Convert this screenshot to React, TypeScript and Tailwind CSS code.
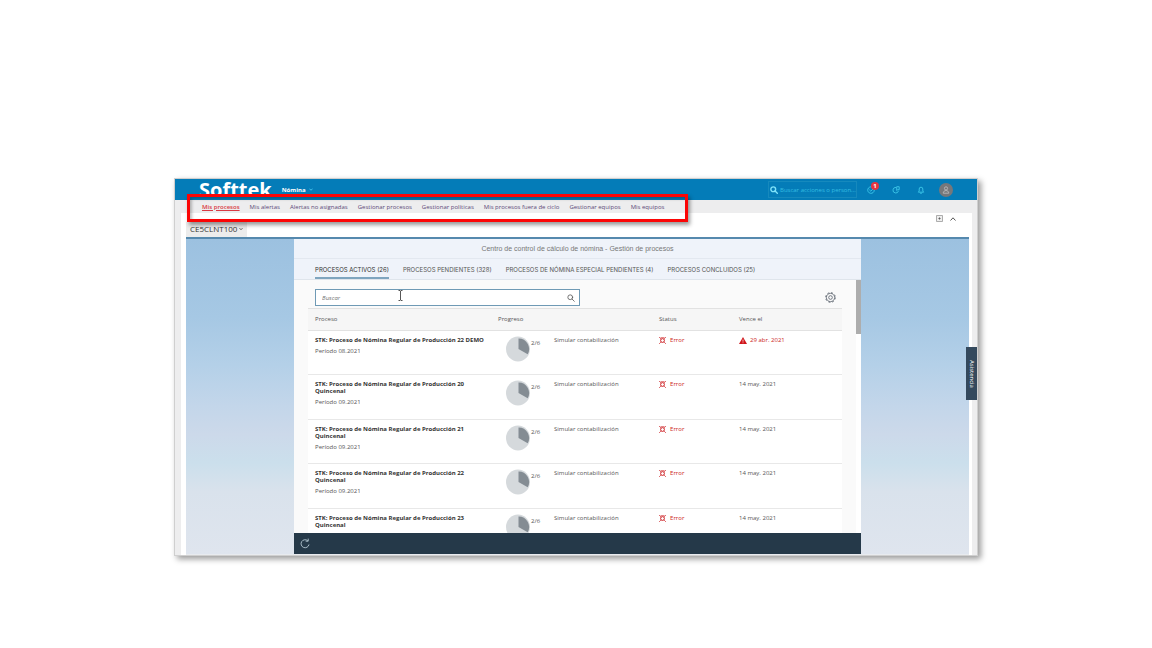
import React from 'react';

const NAV = [
  'Mis procesos',
  'Mis alertas',
  'Alertas no asignadas',
  'Gestionar procesos',
  'Gestionar políticas',
  'Mis procesos fuera de ciclo',
  'Gestionar equipos',
  'Mis equipos',
];

const TABS = [
  'PROCESOS ACTIVOS (26)',
  'PROCESOS PENDIENTES (328)',
  'PROCESOS DE NÓMINA ESPECIAL PENDIENTES (4)',
  'PROCESOS CONCLUIDOS (25)',
];

type Row = { name: string; suffix?: string; period: string; due: string; late?: boolean };

const ROWS: Row[] = [
  { name: 'STK: Proceso de Nómina Regular de Producción 22 DEMO', period: 'Período 08.2021', due: '29 abr. 2021', late: true },
  { name: 'STK: Proceso de Nómina Regular de Producción 20', suffix: 'Quincenal', period: 'Período 09.2021', due: '14 may. 2021' },
  { name: 'STK: Proceso de Nómina Regular de Producción 21', suffix: 'Quincenal', period: 'Período 09.2021', due: '14 may. 2021' },
  { name: 'STK: Proceso de Nómina Regular de Producción 22', suffix: 'Quincenal', period: 'Período 09.2021', due: '14 may. 2021' },
  { name: 'STK: Proceso de Nómina Regular de Producción 23', suffix: 'Quincenal', period: 'Período 09.2021', due: '14 may. 2021' },
];

function SearchIcon({ className, bold }: { className: string; bold?: boolean }) {
  return (
    <svg viewBox="0 0 16 16" className={className} fill="none" stroke="currentColor" strokeWidth={bold ? 2.8 : 1.6} strokeLinecap="round">
      <circle cx="6.5" cy="6.5" r="4.8" />
      <path d="M10.2 10.2 14.6 14.6" />
    </svg>
  );
}

function Pie() {
  return (
    <svg viewBox="0 0 24 26" className="-mt-px h-[26px] w-6 shrink-0">
      <ellipse cx="12" cy="13" rx="12" ry="12.5" fill="#d5d9dc" />
      <path d="M12.5 13V2.6a10.4 10.4 0 0 1 9.2 15.6z" fill="#848c93" />
    </svg>
  );
}

function ErrorIcon() {
  return (
    <svg viewBox="0 0 14 14" className="size-[7px]" fill="none" stroke="currentColor">
      <circle cx="7" cy="7" r="3.8" strokeWidth="2" />
      <path d="M.4.4l3.2 3.2M13.6.4l-3.2 3.2M.4 13.6l3.2-3.2M13.6 13.6l-3.2-3.2" strokeWidth="1.6" />
      <path d="M3 .8h8" strokeWidth="1.2" />
    </svg>
  );
}

function WarningIcon() {
  return (
    <svg viewBox="0 0 16 14" className="h-[7px] w-2">
      <path d="M8 0l8 14H0z" fill="#d0161b" />
      <path d="M8 5v4.4M8 10.8v1.6" stroke="#fff" strokeWidth="1.4" />
    </svg>
  );
}

function GearIcon() {
  return (
    <svg viewBox="0 0 24 24" className="size-[11px]" fill="none" stroke="currentColor">
      <circle cx="12" cy="12" r="9" strokeWidth="1.7" />
      <circle cx="12" cy="12" r="10.6" strokeWidth="1.8" strokeDasharray="4.2 4.12" />
      <circle cx="12" cy="12" r="4" strokeWidth="1.7" />
    </svg>
  );
}

function TopBar() {
  return (
    <header className="flex h-[21px] items-center bg-[#047cb8] pl-6 pr-6 text-white">
      <a href="#inicio" className="text-[20px] font-bold leading-[21px]">
        Softtek
      </a>
      <button className="ml-[10px] flex items-center gap-[3px] text-[6px] font-bold leading-[8px]">
        Nómina
        <svg viewBox="0 0 8 5" className="h-[3px] w-1" fill="none" stroke="#46c3ec" strokeWidth="2">
          <path d="M.8.8 4 4 7.2.8" />
        </svg>
      </button>
      <label className="ml-auto flex h-[17px] w-[89px] items-center gap-[2px] border border-[#1689bd] pl-px text-[#7fe3fa]">
        <SearchIcon className="size-2 shrink-0" bold />
        <input
          aria-label="Buscar acciones o personas"
          placeholder="Buscar acciones o person..."
          className="w-full min-w-0 bg-transparent text-[6px] leading-[8px] outline-none placeholder:text-[#35bde2]"
        />
      </label>
      <div className="ml-[10px] flex items-center gap-[17px] text-[#3ec8ea]">
        <button aria-label="Tareas pendientes" className="relative">
          <svg viewBox="0 0 16 16" className="size-2" fill="none" stroke="currentColor" strokeWidth="1.8">
            <path d="M11 2.4A6.5 6.5 0 1 0 14.5 8M4.8 7.6 7.6 10.4 12 6" />
          </svg>
          <span className="absolute -right-[4px] -top-[4px] flex size-2 items-center justify-center rounded-full bg-[#e5343e] text-[6px] font-bold leading-none text-white">
            1
          </span>
        </button>
        <button aria-label="Actividad">
          <svg viewBox="0 0 16 16" className="size-2" fill="none" stroke="currentColor" strokeWidth="1.8">
            <path d="M8 2.8A5.6 5.6 0 1 0 13 9.6M9.4 1.4h5v6h-3l-2 1.8z" />
          </svg>
        </button>
        <button aria-label="Notificaciones">
          <svg viewBox="0 0 16 16" className="size-2" fill="none" stroke="currentColor" strokeWidth="1.8">
            <path d="M2.8 12.4 4.4 10V6a3.6 3.6 0 0 1 7.2 0v4l1.6 2.4zM6.4 14.6h3.2" />
          </svg>
        </button>
      </div>
      <button aria-label="Perfil" className="ml-[14px] flex size-[14px] items-center justify-center rounded-full bg-[#76777a] text-[#b9babc]">
        <svg viewBox="0 0 16 16" className="size-2" fill="none" stroke="currentColor" strokeWidth="1.8">
          <circle cx="8" cy="4.8" r="3.2" />
          <path d="M2.4 14.4c0-7 11.2-7 11.2 0z" />
        </svg>
      </button>
    </header>
  );
}

function ProcessTable() {
  return (
    <table className="w-full table-fixed border-collapse bg-white text-left text-[6px] leading-[7px] text-[#555]">
      <colgroup>
        <col className="w-[183px]" />
        <col className="w-[161px]" />
        <col className="w-[80px]" />
        <col />
      </colgroup>
      <thead>
        <tr className="h-[22px] border-y border-[#e2e2e2] bg-[#f6f6f6]">
          {['Proceso', 'Progreso', 'Status', 'Vence el'].map((h) => (
            <th key={h} className="pl-[7px] font-normal">
              {h}
            </th>
          ))}
        </tr>
      </thead>
      <tbody>
        {ROWS.map((r) => (
          <tr key={r.name} className="border-b border-[#e8e8e8] align-top odd:h-[44px] even:h-[45px]">
            <td className="pl-[7px] pt-[6px]">
              <div className="whitespace-nowrap font-bold text-[#333]">
                {r.name}
                {r.suffix && <div>{r.suffix}</div>}
              </div>
              <div className="mt-1">{r.period}</div>
            </td>
            <td className="pl-[15px] pt-[6px]">
              <div className="flex">
                <Pie />
                <span className="mt-[3px] w-6 pl-px">2/6</span>
                <span>Simular contabilización</span>
              </div>
            </td>
            <td className="pl-[7px] pt-[6px] text-[#cc1c20]">
              <div className="flex items-center gap-1">
                <ErrorIcon />
                Error
              </div>
            </td>
            <td className="pl-[7px] pt-[6px]">
              {r.late ? (
                <div className="flex items-center gap-[3px] text-[#cc1c20]">
                  <WarningIcon />
                  {r.due}
                </div>
              ) : (
                r.due
              )}
            </td>
          </tr>
        ))}
      </tbody>
    </table>
  );
}

function ProcessPanel() {
  return (
    <section className="mx-auto flex w-[72.4%] flex-col bg-[#fafafa]">
      <h1 className="border-b border-[#e3e8f0] bg-[#eff3fa] text-center font-['Liberation_Sans',sans-serif] text-[7px] leading-[19px] text-[#777]">
        Centro de control de cálculo de nómina - Gestión de procesos
      </h1>
      <div role="tablist" className="flex h-[21px] gap-[14px] border-b border-[#dfe5ec] bg-[#eff3fa] pl-[21px] font-['Inter',sans-serif] text-[6px] text-[#555]">
        {TABS.map((t, i) => (
          <button
            key={t}
            role="tab"
            aria-selected={i === 0}
            className="whitespace-nowrap border-b-2 border-transparent pt-[3px] aria-selected:border-[#7fa5bf] aria-selected:text-[#333]"
          >
            {t}
          </button>
        ))}
      </div>
      <div className="flex h-[253px] overflow-hidden">
        <div className="min-w-0 flex-1 pl-[14px] pr-[14px]">
          <div className="flex items-center justify-between pb-[2px] pl-[7px] pr-[6px] pt-[9px]">
            <div className="relative flex h-[17px] w-[265px] items-center border border-[#6f9ab5] bg-white pl-[6px] pr-1">
              <input
                aria-label="Buscar"
                placeholder="Buscar"
                className="w-full min-w-0 bg-transparent text-[6px] leading-[8px] outline-none placeholder:italic placeholder:text-[#777]"
              />
              <button aria-label="Iniciar búsqueda" className="text-[#555]">
                <SearchIcon className="size-2" />
              </button>
              <svg viewBox="0 0 10 22" className="absolute left-[82px] top-0 h-[11px] w-[5px]" fill="none" stroke="#444" strokeWidth="1.8">
                <path d="M1 1h3l1 1 1-1h3M5 2v18M1 21h3l1-1 1 1h3" />
              </svg>
            </div>
            <button aria-label="Configuración" className="text-[#555d68]">
              <GearIcon />
            </button>
          </div>
          <ProcessTable />
        </div>
        <div className="w-[5px] bg-white">
          <div className="h-[54px] bg-[#adadad]" />
        </div>
      </div>
      <footer className="flex h-[21px] items-center bg-[#253949] pl-[6px]">
        <button aria-label="Actualizar" className="text-[#b6c8d4]">
          <svg viewBox="0 0 20 22" className="h-[11px] w-[10px]" fill="none" stroke="currentColor" strokeWidth="1.8">
            <path d="M15.6 5.6A8 8 0 1 0 18 13M11.4 6.4h5V1.2" />
          </svg>
        </button>
      </footer>
    </section>
  );
}

export default function App() {
  return (
    <div className="min-h-screen bg-white pt-[178px] font-['Open_Sans','Noto_Sans',sans-serif]">
      <div className="relative mx-auto w-full max-w-[804px] border border-[#cfcfcf] bg-[#ededee] shadow-[3px_3px_6px_rgba(0,0,0,0.4)]">
        <TopBar />
        <nav className="flex h-[13px] items-center gap-[10px] pl-[27px] text-[6px] leading-[8px] text-[#5c4a78]">
          {NAV.map((n, i) => (
            <a
              key={n}
              href="#nav"
              aria-current={i === 0 ? 'page' : undefined}
              className="whitespace-nowrap aria-[current=page]:font-semibold aria-[current=page]:text-[#d93a44] aria-[current=page]:underline"
            >
              {n}
            </a>
          ))}
        </nav>
        <main className="ml-[6px] mr-[5px] bg-white pl-[5px] pr-[3px]">
          <div className="flex h-6 justify-between pr-[13px]">
            <button className="flex h-[15px] items-center gap-[2px] self-end bg-[#ececec] px-1 pb-px text-[8px] leading-none text-[#333]">
              CE5CLNT100
              <svg viewBox="0 0 8 4" className="h-[2px] w-1" fill="none" stroke="currentColor" strokeWidth="1.4">
                <path d="M.6.4 4 3.2 7.4.4" />
              </svg>
            </button>
            <div className="flex h-[11px] items-center gap-[7px] text-[#555]">
              <button aria-label="Añadir">
                <svg viewBox="0 0 14 14" className="size-[7px]" fill="#eee" stroke="#999" strokeWidth="1.6">
                  <path d="M1 1h12v12H1z" />
                  <path d="M4.8 7h4.4M7 4.8v4.4" stroke="#555" />
                </svg>
              </button>
              <button aria-label="Contraer">
                <svg viewBox="0 0 12 8" className="h-1 w-[6px]" fill="none" stroke="currentColor" strokeWidth="2">
                  <path d="M1 7l5-5.4L11 7" />
                </svg>
              </button>
            </div>
          </div>
          <div className="border-b border-t-2 border-b-[#e8ebef] border-t-[#5589ae] bg-[linear-gradient(#9cc1e0,#a6c8e4_25%,#b4d0e8_40%,#c3d6ea_53%,#ccd9ea_62%,#cbdfec_71%,#d9e2ec_80%,#dfe5ee)]">
            <ProcessPanel />
          </div>
        </main>
        <button className="absolute right-0 top-[168px] flex h-[53px] w-[11px] items-center justify-center bg-[#34495d] text-[6px] leading-none text-white [writing-mode:vertical-rl]">
          Asistencia
        </button>
        <div className="pointer-events-none absolute left-3 top-[15px] h-7 w-[501px] border-3 border-[#fb0505] shadow-[2px_3px_4px_rgba(0,0,0,0.4),inset_2px_2px_3px_rgba(0,0,0,0.25)]" />
      </div>
    </div>
  );
}
